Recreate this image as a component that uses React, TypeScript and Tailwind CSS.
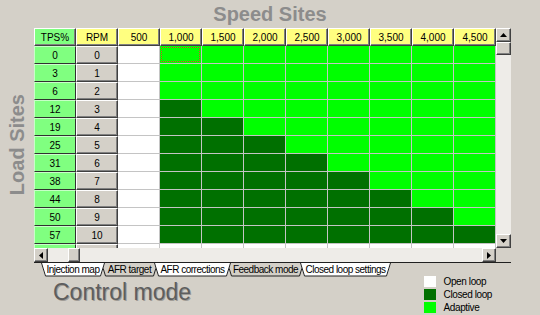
import React from "react";

const SPEEDS = ["500", "1,000", "1,500", "2,000", "2,500", "3,000", "3,500", "4,000", "4,500"];
const TPS = [0, 3, 6, 12, 19, 25, 31, 38, 44, 50, 57, 65];

const TABS: { label: string; w: number; white: boolean }[] = [
  { label: "Injection map", w: 64, white: true },
  { label: "AFR target", w: 57, white: false },
  { label: "AFR corrections", w: 77, white: true },
  { label: "Feedback mode", w: 77, white: false },
  { label: "Closed loop settings", w: 91, white: true },
];

const raised =
  "border border-t-white border-l-white border-r-[#404040] border-b-[#404040] shadow-[inset_-1px_-1px_0_#808080]";

function cellColor(row: number, col: number) {
  if (col === 0 || row > 10) return "bg-white";
  return col - 1 < row - 2 ? "bg-[#007000]" : "bg-[#00ff00]";
}

function Arrow({ dir }: { dir: "up" | "down" | "left" | "right" }) {
  const pts = {
    up: "0,4 3.5,0 7,4",
    down: "0,0 3.5,4 7,0",
    left: "4,0 0,3.5 4,7",
    right: "0,0 4,3.5 0,7",
  }[dir];
  const vertical = dir === "up" || dir === "down";
  return (
    <svg width={vertical ? 7 : 4} height={vertical ? 4 : 7} viewBox={vertical ? "0 0 7 4" : "0 0 4 7"}>
      <polygon points={pts} fill="#000" />
    </svg>
  );
}

function Tab({ label, w, white }: { label: string; w: number; white: boolean }) {
  return (
    <div
      className={`relative -ml-[4px] flex h-[14px] shrink-0 items-center justify-center first:ml-0 ${white ? "z-10" : "z-0"}`}
      style={{ width: w }}
    >
      <svg className="absolute inset-0" width={w} height={14} viewBox={`0 0 ${w} 14`}>
        <polygon
          points={`0,0 ${w},0 ${w - 4},13 4,13`}
          fill={white ? "#ffffff" : "#d4d0c8"}
        />
        <polyline points={`0.5,0 4.5,13 ${w - 4.5},13 ${w - 0.5},0`} fill="none" stroke="#202020" strokeWidth={1} />
      </svg>
      <span className="relative text-[10px] leading-none tracking-[-0.05em] text-black">{label}</span>
    </div>
  );
}

export default function App() {
  return (
    <div className="flex h-[315px] w-[540px] flex-col overflow-hidden bg-[#d4d0c8] font-['Liberation_Sans',Arial,sans-serif]">
      <div className="flex h-[28px] shrink-0 items-center justify-center text-[20px] font-bold text-[#8c8c8c]">
        Speed Sites
      </div>

      <div className="flex">
        <div className="flex w-[34px] shrink-0 items-center justify-center pb-[14px]">
          <span className="rotate-180 text-[20px] font-bold leading-none text-[#8c8c8c] [writing-mode:vertical-rl]">
            Load Sites
          </span>
        </div>

        <div className="flex w-[477px] flex-col">
          <div className="flex h-[220px]">
            <div className="grid h-[220px] w-[462px] grid-cols-[repeat(11,42px)] auto-rows-[18px] overflow-hidden text-[10px] text-black">
              <div className={`flex items-center justify-center bg-[#80ff80] ${raised}`}>TPS%</div>
              <div className={`flex items-center justify-center bg-[#ffff80] ${raised}`}>RPM</div>
              {SPEEDS.map((s) => (
                <div key={s} className={`flex items-center justify-center bg-[#ffff80] ${raised}`}>
                  {s}
                </div>
              ))}
              {TPS.map((t, r) => (
                <React.Fragment key={r}>
                  <div className="flex items-center justify-center border border-t-[#c8ffc8] border-l-[#c8ffc8] border-r-[#303030] border-b-[#303030] bg-[#80ff80]">
                    {t}
                  </div>
                  <div className={`flex items-center justify-center bg-[#d4d0c8] ${raised}`}>{r}</div>
                  {SPEEDS.map((s, c) => (
                    <div
                      key={s}
                      className={`relative border-r border-b border-[#c4c4c4] ${cellColor(r, c)}`}
                    >
                      {r === 0 && c === 1 ? (
                        <div className="absolute inset-[1px] border border-dotted border-[#e04a2a]" />
                      ) : null}
                    </div>
                  ))}
                </React.Fragment>
              ))}
            </div>

            <div className="flex w-[15px] flex-col bg-[#eeece8]">
              <div className={`flex h-[14px] items-center justify-center bg-[#d4d0c8] ${raised}`}>
                <Arrow dir="up" />
              </div>
              <div className={`h-[13px] bg-[#d4d0c8] ${raised}`} />
              <div className="flex-1" />
              <div className={`flex h-[14px] items-center justify-center bg-[#d4d0c8] ${raised}`}>
                <Arrow dir="down" />
              </div>
            </div>
          </div>

          <div className="flex h-[14px]">
            <div className="flex w-[462px] bg-[#eeece8]">
              <div className={`flex w-[14px] items-center justify-center bg-[#d4d0c8] ${raised}`}>
                <Arrow dir="left" />
              </div>
              <div className="w-[20px]" />
              <div className={`w-[12px] bg-[#d4d0c8] ${raised}`} />
              <div className="flex-1" />
              <div className={`flex w-[14px] items-center justify-center bg-[#d4d0c8] ${raised}`}>
                <Arrow dir="right" />
              </div>
            </div>
          </div>

          <div className="flex h-[14px] border-t border-[#202020] pl-[7px]">
            {TABS.map((t) => (
              <Tab key={t.label} {...t} />
            ))}
          </div>
        </div>
      </div>

      <div className="flex flex-1 items-start">
        <div className="ml-[53px] pt-[5px] text-[23px] leading-none text-[#5e5e5e] [text-shadow:1px_1px_0_#a09c96]">
          Control mode
        </div>
        <div className="ml-auto mr-[48px] flex flex-col gap-[2px] text-[10px] leading-[11px] tracking-[-0.04em] text-black">
          {[
            { c: "bg-white", l: "Open loop" },
            { c: "bg-[#007000]", l: "Closed loop" },
            { c: "bg-[#00ff00]", l: "Adaptive" },
          ].map((it) => (
            <div key={it.l} className="flex h-[11px] items-center gap-[8px]">
              <div className={`h-[11px] w-[12px] ${it.c}`} />
              <span>{it.l}</span>
            </div>
          ))}
        </div>
      </div>
    </div>
  );
}
